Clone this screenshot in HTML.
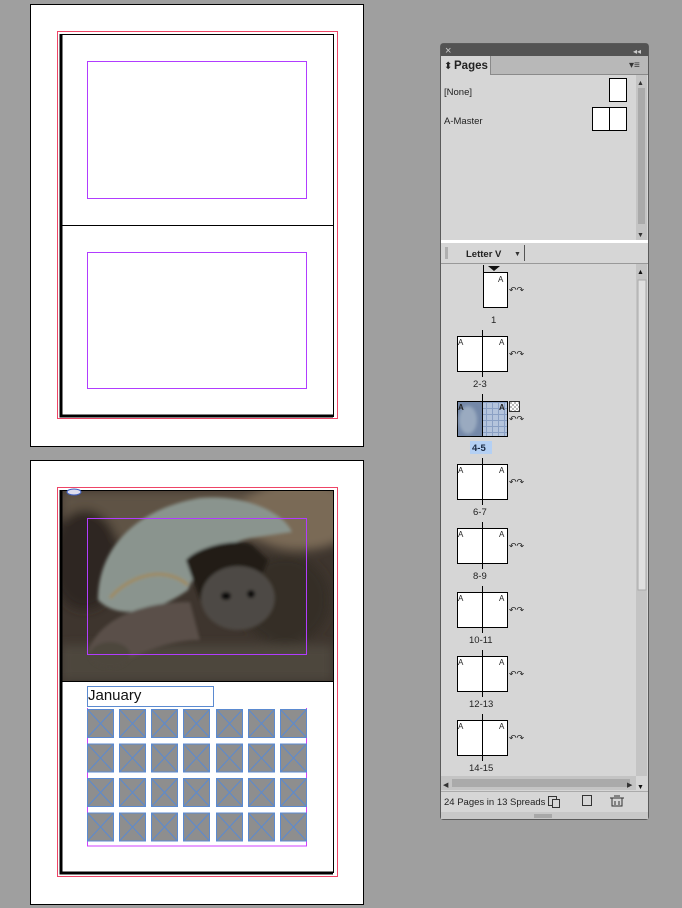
<!DOCTYPE html>
<html><head><meta charset="utf-8"><style>
html,body{margin:0;padding:0;background:#9f9f9f;width:682px;height:908px;overflow:hidden}
svg text{font-family:"Liberation Sans",sans-serif}
</style></head><body>
<svg width="682" height="908" viewBox="0 0 682 908" xmlns="http://www.w3.org/2000/svg">
<defs>
<filter id="bl" x="-20%" y="-20%" width="140%" height="140%"><feGaussianBlur stdDeviation="5"/></filter>
<filter id="bl2"><feGaussianBlur stdDeviation="1.5"/></filter>
<clipPath id="ph"><rect x="61" y="491" width="272" height="190"/></clipPath>
<pattern id="gr" width="6" height="6" patternUnits="userSpaceOnUse"><rect width="6" height="6" fill="#b4c4dc"/><path d="M0 .5H6M.5 0V6" stroke="#8aa0c4" stroke-width="1"/></pattern>
<pattern id="ck" width="4" height="4" patternUnits="userSpaceOnUse"><rect width="4" height="4" fill="#fff"/><rect width="2" height="2" fill="#bbb"/><rect x="2" y="2" width="2" height="2" fill="#bbb"/></pattern>
</defs>
<rect width="682" height="908" fill="#9f9f9f"/>

<!-- Page 1 -->
<rect x="30.5" y="4.5" width="333" height="442" fill="#fff" stroke="#000"/>
<rect x="57.5" y="31.5" width="280" height="387" fill="none" stroke="#ee4466"/>
<rect x="60.5" y="34.5" width="273" height="382" fill="none" stroke="#000"/>
<path d="M61 34V416H333" stroke="#000" stroke-width="3" fill="none"/>
<line x1="60" y1="225.5" x2="333" y2="225.5" stroke="#000"/>
<rect x="87.5" y="61.5" width="219" height="137" fill="none" stroke="#b13cff"/>
<rect x="87.5" y="252.5" width="219" height="136" fill="none" stroke="#b13cff"/>

<!-- Page 2 -->
<rect x="30.5" y="460.5" width="333" height="444" fill="#fff" stroke="#000"/>
<rect x="57.5" y="487.5" width="280" height="389" fill="none" stroke="#ee4466"/>
<g clip-path="url(#ph)">
<rect x="61" y="491" width="272" height="190" fill="#3e352e"/>
<g filter="url(#bl)">
<rect x="61" y="491" width="272" height="50" fill="#5e5244"/>
<ellipse cx="300" cy="515" rx="60" ry="35" fill="#7a6a56"/>
<ellipse cx="85" cy="560" rx="35" ry="50" fill="#2e2620"/>
<rect x="61" y="645" width="272" height="36" fill="#4e463e"/>
<ellipse cx="285" cy="600" rx="45" ry="45" fill="#362e26"/>
</g>
<g filter="url(#bl2)">
<path d="M98 600 C98 545 140 508 200 498 C250 494 285 515 292 532 L250 538 C220 545 200 560 188 590 C160 610 120 622 98 600Z" fill="#8a948e"/>
<path d="M110 598 C130 575 165 565 188 585" stroke="#a08a5c" stroke-width="3" fill="none"/>
<path d="M186 560 C200 545 240 538 252 545 L268 560 L252 600 L200 600Z" fill="#221c16"/>
<ellipse cx="238" cy="598" rx="37" ry="32" fill="#4e4a44"/>
<ellipse cx="226" cy="596" rx="5" ry="4" fill="#0e0e0e"/>
<ellipse cx="251" cy="594" rx="4" ry="4" fill="#0e0e0e"/>
<path d="M88 652 C98 620 140 602 190 602 L200 640 C160 640 130 660 108 668Z" fill="#5a5048"/>
<ellipse cx="110" cy="655" rx="20" ry="13" fill="#4e463e"/>
</g>
</g>
<rect x="60.5" y="490.5" width="273" height="191" fill="none" stroke="#000"/>
<path d="M61 490V873H333" stroke="#000" stroke-width="3" fill="none"/>
<path d="M333.5 490V873" stroke="#000"/>
<rect x="87.5" y="518.5" width="219" height="136" fill="none" stroke="#b13cff"/>
<ellipse cx="74" cy="492" rx="7" ry="3" fill="#dde" stroke="#4060c0"/>
<rect x="87.5" y="686.5" width="126" height="20" fill="#fff" stroke="#5b8ad0"/>
<text x="88" y="700" font-size="15" fill="#111">January</text>
<path d="M87.5 708V846H306.5V708" fill="none" stroke="#d040ff"/>
<g stroke="#5b8ad0" stroke-width="1">
<g id="row">
<g id="c"><rect x="87.5" y="709.5" width="26" height="28" fill="#8e8e8e"/><path d="M87.5 709.5L113.5 737.5M113.5 709.5L87.5 737.5"/></g>
<use href="#c" x="32"/><use href="#c" x="64"/><use href="#c" x="96"/><use href="#c" x="129"/><use href="#c" x="161"/><use href="#c" x="193"/>
</g>
<use href="#row" y="34.5"/><use href="#row" y="69"/><use href="#row" y="103.5"/>
</g>

<!-- Panel -->
<rect x="440.5" y="43.5" width="208" height="776" rx="3" fill="#d6d6d6" stroke="#5a5a5a"/>
<rect x="441" y="44" width="207" height="12" fill="#535353"/>
<text x="445" y="54" font-size="11" fill="#ccc">×</text>
<text x="633" y="54" font-size="8" fill="#ccc">◂◂</text>
<rect x="441" y="56" width="207" height="18" fill="#b8b8b8"/>
<rect x="441" y="56" width="49" height="19" fill="#d6d6d6"/>
<line x1="490.5" y1="56" x2="490.5" y2="74" stroke="#8a8a8a"/>
<line x1="490" y1="74.5" x2="648" y2="74.5" stroke="#8a8a8a"/>
<text x="444" y="69" font-size="10" fill="#222">⬍</text>
<text x="454" y="69" font-size="11.5" font-weight="bold" fill="#222">Pages</text>
<text x="629" y="68" font-size="10" fill="#333">▾≡</text>
<text x="444" y="95" font-size="9.5" fill="#222">[None]</text>
<rect x="609.5" y="78.5" width="17" height="23" fill="#fff" stroke="#000"/>
<text x="444" y="124" font-size="9.5" fill="#222">A-Master</text>
<rect x="592.5" y="107.5" width="34" height="23" fill="#fff" stroke="#000"/>
<line x1="609.5" y1="108" x2="609.5" y2="130" stroke="#000"/>
<rect x="636" y="75" width="11" height="165" fill="#c4c4c4"/>
<rect x="638" y="88" width="7" height="136" fill="#aaa"/>
<text x="637" y="85" font-size="7" fill="#333">▲</text>
<text x="637" y="237" font-size="7" fill="#333">▼</text>
<rect x="441" y="240" width="207" height="3" fill="#fff"/>
<rect x="441" y="243" width="207" height="20" fill="#d6d6d6"/>
<line x1="441" y1="263.5" x2="648" y2="263.5" stroke="#999"/>
<path d="M445 248h3M445 250h3M445 252h3M445 254h3M445 256h3M445 258h3" stroke="#888"/>
<text x="466" y="257" font-size="9.5" font-weight="bold" fill="#222">Letter V</text>
<text x="514" y="256" font-size="7" fill="#333">▼</text>
<line x1="524.5" y1="245" x2="524.5" y2="261" stroke="#555"/>
<rect x="636" y="264" width="11" height="512" fill="#c4c4c4"/>
<rect x="638" y="280" width="8" height="310" fill="#e0e0e0" stroke="#aaa"/>
<text x="637" y="274" font-size="7" fill="#111">▲</text>
<text x="637" y="789" font-size="7" fill="#111">▼</text>
<rect x="441" y="776" width="195" height="14" fill="#c4c4c4"/>
<rect x="452" y="779" width="178" height="8" fill="#aaa"/>
<text x="443" y="787" font-size="7" fill="#333">◀</text>
<text x="627" y="787" font-size="7" fill="#333">▶</text>
<line x1="441" y1="791.5" x2="648" y2="791.5" stroke="#aaa"/>
<text x="444" y="805" font-size="9.5" fill="#222">24 Pages in 13 Spreads</text>
<rect x="548.5" y="796.5" width="8" height="9" fill="none" stroke="#333"/>
<rect x="552.5" y="799.5" width="7" height="8" fill="#d6d6d6" stroke="#333"/>
<rect x="582.5" y="795.5" width="9" height="10" fill="none" stroke="#333"/>
<path d="M610 798h14M612 798v8h10v-8M615 801v4M619 801v4M614 796h6" stroke="#333" fill="none"/>
<rect x="441" y="812" width="207" height="7" fill="#c8c8c8"/>
<path d="M535 814v4M537 814v4M539 814v4M541 814v4M543 814v4M545 814v4M547 814v4M549 814v4M551 814v4" stroke="#888"/>

<!-- spreads -->
<g font-size="8" fill="#222">
<path d="M488 266h12l-6 5z" fill="#111"/>
<line x1="483.5" y1="265" x2="483.5" y2="272" stroke="#000"/>
<rect x="483.5" y="272.5" width="24" height="35" fill="#fff" stroke="#000"/>
<text x="498" y="282" font-size="8">A</text>
<text x="509" y="293" font-size="9">↶↷</text>
<text x="491" y="323" font-size="9.5" fill="#222">1</text>
<g id="sp">
<line x1="482.5" y1="330" x2="482.5" y2="377" stroke="#000"/>
<rect x="457.5" y="336.5" width="50" height="35" fill="#fff" stroke="#000"/>
<line x1="482.5" y1="336" x2="482.5" y2="372" stroke="#000"/>
<text x="458" y="345" font-size="8">A</text><text x="499" y="345" font-size="8">A</text>
<text x="509" y="357" font-size="9">↶↷</text>
</g>
<text x="473" y="387" font-size="9.5">2-3</text>
<line x1="482.5" y1="394" x2="482.5" y2="401" stroke="#000"/>
<rect x="457.5" y="401.5" width="50" height="35" fill="url(#gr)" stroke="#000"/>
<rect x="458" y="402" width="25" height="34" fill="#7488a8"/>
<ellipse cx="468" cy="420" rx="9" ry="14" fill="#9aaac0" filter="url(#bl2)"/>
<line x1="482.5" y1="401" x2="482.5" y2="437" stroke="#000"/>
<text x="458" y="410" font-size="8" font-weight="bold">A</text><text x="499" y="410" font-size="8" font-weight="bold">A</text>
<rect x="509.5" y="401.5" width="10" height="10" fill="url(#ck)" stroke="#333"/>
<text x="509" y="422" font-size="9">↶↷</text>
<rect x="470" y="441" width="22" height="13" fill="#b4d0f4"/>
<text x="472" y="451" font-size="9.5" font-weight="bold" fill="#1a2a44">4-5</text>
<use href="#sp" y="128"/><text x="473" y="515" font-size="9.5">6-7</text>
<use href="#sp" y="192"/><text x="473" y="579" font-size="9.5">8-9</text>
<use href="#sp" y="256"/><text x="469" y="643" font-size="9.5">10-11</text>
<use href="#sp" y="320"/><text x="469" y="707" font-size="9.5">12-13</text>
<use href="#sp" y="384"/><text x="469" y="771" font-size="9.5">14-15</text>
</g>
</svg>
</body></html>
